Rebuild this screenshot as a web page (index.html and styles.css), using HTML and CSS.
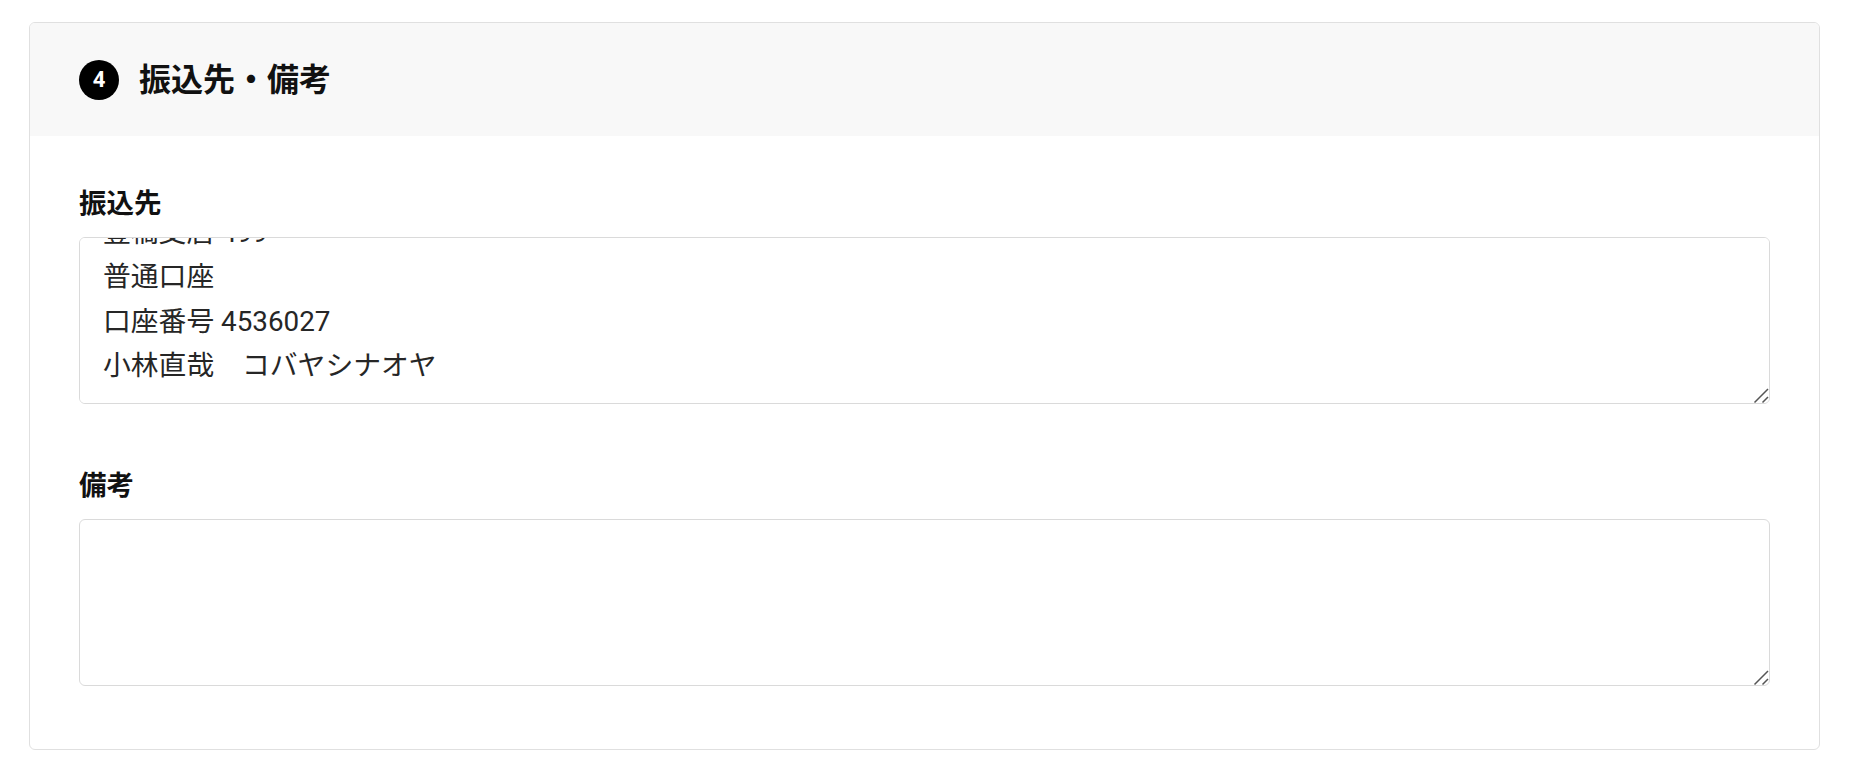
FILE: index.html
```
<!DOCTYPE html>
<html lang="ja">
<head>
<meta charset="utf-8">
<title>振込先・備考</title>
<link rel="stylesheet" href="styles.css">
</head>
<body>
<div class="page">
  <section class="card">
    <header class="card-header">
      <span class="badge">4</span>
      <h2 class="card-title">振込先・備考</h2>
    </header>
    <div class="card-body">
      <div class="field">
        <label class="field-label" for="bank">振込先</label>
        <div class="input-wrap">
          <textarea id="bank" class="field-input">豊川信用金庫
豊橋支店 499
普通口座
口座番号 4536027
小林直哉　コバヤシナオヤ</textarea>
          <svg class="grip" width="18" height="18" viewBox="0 0 18 18" aria-hidden="true"><path d="M2.5 16.5 L16 3 M10.5 16.5 L16 11" stroke="#555" stroke-width="1.5" fill="none"/></svg>
        </div>
      </div>
      <div class="field">
        <label class="field-label" for="note">備考</label>
        <div class="input-wrap">
          <textarea id="note" class="field-input"></textarea>
          <svg class="grip" width="18" height="18" viewBox="0 0 18 18" aria-hidden="true"><path d="M2.5 16.5 L16 3 M10.5 16.5 L16 11" stroke="#555" stroke-width="1.5" fill="none"/></svg>
        </div>
      </div>
    </div>
  </section>
</div>
<script src="script.js"></script>
</body>
</html>
```
FILE: styles.css
```
* { box-sizing: border-box; }
html, body { margin: 0; padding: 0; background: #fff; }
body {
  font-family: Roboto, "Noto Sans CJK JP", sans-serif;
  color: #111;
}
.page {
  padding: 22px 32px 0 29px;
}
.card {
  border: 1px solid #e0e0e0;
  border-radius: 6px;
  overflow: hidden;
  background: #fff;
}
.card-header {
  display: flex;
  align-items: center;
  gap: 20px;
  height: 113px;
  padding: 0 49px;
  background: #f8f8f8;
}
.badge {
  width: 40px;
  height: 40px;
  border-radius: 50%;
  background: #000;
  color: #fff;
  font-family: Roboto, sans-serif;
  font-weight: 700;
  font-size: 22px;
  display: flex;
  align-items: center;
  justify-content: center;
  flex: none;
}
.card-title {
  margin: 0;
  font-size: 32px;
  font-weight: 700;
  color: #111;
  line-height: 40px;
}
.card-body {
  padding: 48px 49px 63px;
  display: flex;
  flex-direction: column;
  gap: 62px;
}
.field {
  display: flex;
  flex-direction: column;
}
.field-label {
  font-size: 27.5px;
  font-weight: 700;
  line-height: 40px;
  margin-bottom: 13px;
  color: #111;
}
.input-wrap {
  position: relative;
}
.field-input {
  display: block;
  width: 100%;
  height: 167px;
  padding: 14px 23px;
  border: 1px solid #dadada;
  border-radius: 6px;
  font-family: Roboto, "Noto Sans CJK JP", sans-serif;
  font-size: 27.8px;
  line-height: 44.5px;
  color: #262626;
  background: #fff;
  resize: none;
  outline: none;
}
.grip {
  position: absolute;
  right: 0;
  bottom: 0;
  pointer-events: none;
}
```
FILE: script.js
```
document.querySelectorAll('#bank').forEach(function (t) {
  t.scrollTop = t.scrollHeight;
});
```
